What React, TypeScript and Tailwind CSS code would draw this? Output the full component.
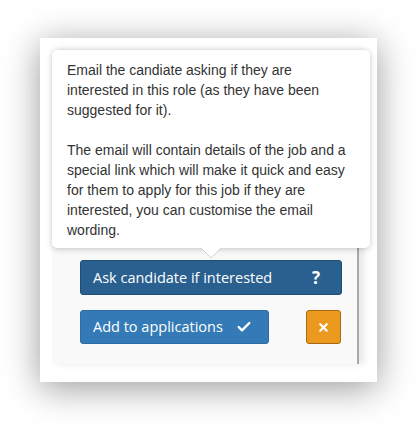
import { Check, X } from 'lucide-react'

export default function App() {
  return (
    <div className="bg-white min-h-screen w-[417px] h-[424px] pt-[38px] pl-[40px]">
      {/* Card */}
      <div className="w-[337px] h-[344px] bg-white pt-[12px] pl-[12px] shadow-[0_6px_34px_rgba(0,0,0,0.4)]">
        {/* Grey panel */}
        <div className="relative w-[307px] h-[314px] bg-[#f9f9f9] border-r-2 border-[#a9a9a9] pt-[210px] pl-[28px] shadow-[5px_0_7px_rgba(0,0,0,0.09)]">
          {/* Tooltip */}
          <div className="absolute left-0 top-0 w-[318px] h-[198px] bg-white rounded-[5px] shadow-[0_1px_6px_rgba(0,0,0,0.22)] pt-[10px] px-[15px] text-[14px] leading-[20px] text-[#333] font-['Liberation_Sans',Arial,sans-serif] z-10">
            <p>
              Email the candiate asking if they are interested in this role (as they have been suggested for it).
            </p>
            <p className="mt-[20px]">
              The email will contain details of the job and a special link which will make it quick and easy for them to apply for this job if they are interested, you can customise the email wording.
            </p>
            <svg className="absolute left-[148px] top-[197px]" width="22" height="12" viewBox="0 0 22 12">
              <path d="M0 0 L11 11 L22 0" fill="#ffffff" stroke="#d0d0d0" strokeWidth="1" />
              <rect x="0" y="0" width="22" height="1" fill="#ffffff" />
            </svg>
          </div>

          <div className="flex flex-col gap-[15px] font-['Open_Sans',sans-serif] text-white text-[14.5px]">
            <button className="w-[262px] h-[35px] flex items-center justify-between pl-[12px] pr-[21px] rounded-[3px] bg-[#2a6090] border border-[#204d74]">
              <span>Ask candidate if interested</span>
              <span className="font-bold text-[17px]">?</span>
            </button>
            <div className="flex items-center">
              <button className="w-[189px] h-[34px] flex items-center pl-[12px] gap-[13px] rounded-[3px] bg-[#337ab7] border border-[#2e6da4]">
                <span>Add to applications</span>
                <Check className="w-[16px] h-[16px]" strokeWidth={3.5} />
              </button>
              <button className="ml-[37px] w-[35px] h-[34px] flex items-center justify-center rounded-[3px] bg-[#ec991f] border border-[#a8690f]">
                <X className="w-[13px] h-[13px]" strokeWidth={4} />
              </button>
            </div>
          </div>
        </div>
      </div>
    </div>
  )
}
